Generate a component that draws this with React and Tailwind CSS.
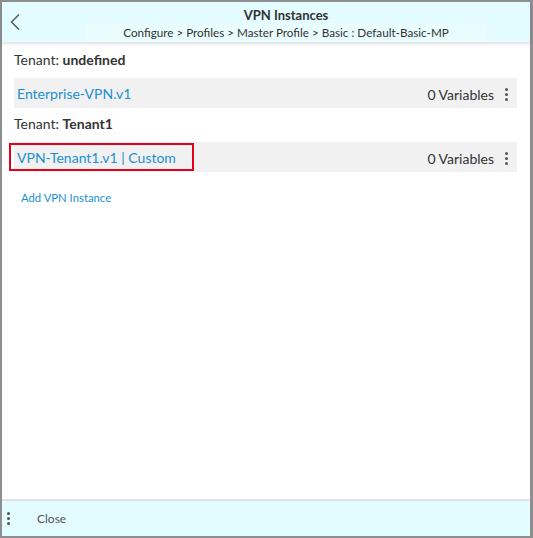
import React from 'react';

function Kebab({ className = '' }) {
  return (
    <span className={`flex flex-col items-center justify-center gap-[2px] ${className}`}>
      <span className="block w-[3px] h-[3px] rounded-full bg-[#555]" />
      <span className="block w-[3px] h-[3px] rounded-full bg-[#555]" />
      <span className="block w-[3px] h-[3px] rounded-full bg-[#555]" />
    </span>
  );
}

function InstanceRow({ name, highlighted }) {
  return (
    <div className="flex items-center justify-between h-[30px] bg-[#f1f1f1]">
      <div className="flex items-center h-full">
        {highlighted ? (
          <span className="-ml-[5px] flex items-center h-[28px] pl-[6px] pr-[16px] border-2 border-[#e2001a] text-[14px] text-[#1b8fd3]">
            {name}
          </span>
        ) : (
          <span className="pl-[3px] text-[14px] text-[#1b8fd3]">{name}</span>
        )}
      </div>
      <div className="flex items-center pr-[9px] pt-[2px]">
        <span className="text-[14px] text-[#333]">0 Variables</span>
        <Kebab className="ml-[11px]" />
      </div>
    </div>
  );
}

export default function App() {
  return (
    <div
      className="w-[533px] h-[538px] flex flex-col bg-white border-t-2 border-l-2 border-b-2 border-r-[3px] border-[#8e8e8e] text-[#333]"
      style={{ fontFamily: 'Lato, "Open Sans", sans-serif' }}
    >
      <div className="flex h-[40px] bg-[#e2fcff] shadow-[0_2px_3px_rgba(0,0,0,0.12)] relative z-10">
        <div className="w-[83px] flex items-center pl-[7px]">
          <svg width="12" height="18" viewBox="0 0 12 18" fill="none">
            <path d="M10 1.5 L2.5 9 L10 16.5" stroke="#555" strokeWidth="1.4" />
          </svg>
        </div>
        <div className="w-[402px] flex flex-col">
          <div className="h-[21px] flex items-end justify-center text-[13px] font-bold text-[#333] leading-none pb-[1px]">
            VPN Instances
          </div>
          <div className="flex-1 flex items-center justify-center bg-[#e9fdff] text-[11.7px] text-[#333] leading-none">
            Configure &gt; Profiles &gt; Master Profile &gt; Basic : Default-Basic-MP
          </div>
        </div>
        <div className="flex-1" />
      </div>

      <div className="flex-1 flex flex-col pl-[12px] pr-[13px]">
        <div className="h-[36px] flex items-center pb-[2px] text-[14px]">
          Tenant:&nbsp;<span className="font-bold">undefined</span>
        </div>
        <InstanceRow name="Enterprise-VPN.v1" />
        <div className="h-[34px] flex items-center pb-[3px] text-[14px]">
          Tenant:&nbsp;<span className="font-bold">Tenant1</span>
        </div>
        <InstanceRow name="VPN-Tenant1.v1 | Custom" highlighted />
        <div className="h-[51px] flex items-center pl-[7px] pt-[1px] text-[11.3px] text-[#1b8fd3]">
          Add VPN Instance
        </div>
      </div>

      <div className="h-[37px] flex items-center bg-[#e2fcff] border-t-2 border-[#e2e2e2]">
        <Kebab className="ml-[5px]" />
        <span className="ml-[27px] text-[12px] text-[#555]">Close</span>
      </div>
    </div>
  );
}
